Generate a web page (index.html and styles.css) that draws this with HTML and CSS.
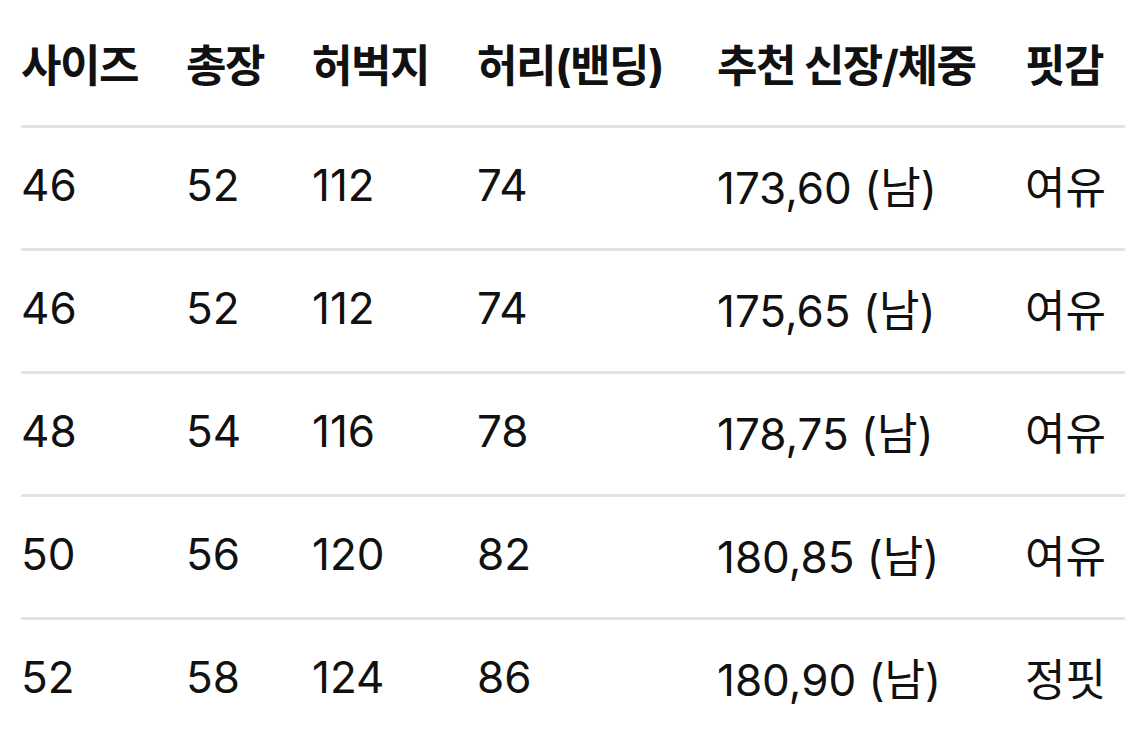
FILE: index.html
```html
<!DOCTYPE html>
<html lang="ko">
<head>
<meta charset="utf-8">
<link rel="stylesheet" href="styles.css">
</head>
<body>
<div class="wrap">
<table class="size-table">
  <colgroup>
    <col class="c1"><col class="c2"><col class="c3"><col class="c4"><col class="c5"><col class="c6">
  </colgroup>
  <thead>
    <tr><th>사이즈</th><th>총장</th><th>허벅지</th><th>허리(밴딩)</th><th>추천 신장/체중</th><th>핏감</th></tr>
  </thead>
  <tbody>
    <tr><td>46</td><td>52</td><td>112</td><td>74</td><td>173,60 (남)</td><td>여유</td></tr>
    <tr><td>46</td><td>52</td><td>112</td><td>74</td><td>175,65 (남)</td><td>여유</td></tr>
    <tr><td>48</td><td>54</td><td>116</td><td>78</td><td>178,75 (남)</td><td>여유</td></tr>
    <tr><td>50</td><td>56</td><td>120</td><td>82</td><td>180,85 (남)</td><td>여유</td></tr>
    <tr><td>52</td><td>58</td><td>124</td><td>86</td><td>180,90 (남)</td><td>정핏</td></tr>
  </tbody>
</table>
</div>
</body>
</html>
```
FILE: styles.css
```css
html, body {
  margin: 0;
  padding: 0;
  background: #ffffff;
  overflow: hidden;
}
.wrap {
  padding-left: 21px;
  width: 1104px;
}
.size-table {
  border-collapse: collapse;
  width: 100%;
  table-layout: fixed;
  font-family: "Inter", "Noto Sans CJK KR", sans-serif;
  font-size: 44px;
  color: #111111;
}
.c1 { width: 165px; }
.c2 { width: 126px; }
.c3 { width: 165px; }
.c4 { width: 240px; }
.c5 { width: 308px; }
.c6 { width: 100px; }
th, td {
  text-align: left;
  padding: 0;
  white-space: nowrap;
  vertical-align: middle;
  box-sizing: border-box;
}
th {
  height: 126px;
  padding-top: 2px;
  font-weight: 700;
  letter-spacing: -1.5px;
  border-bottom: 3px solid #e4e4e4;
}
td {
  height: 123px;
  font-weight: 400;
  padding-bottom: 6px;
  border-bottom: 3px solid #e4e4e4;
}
```
